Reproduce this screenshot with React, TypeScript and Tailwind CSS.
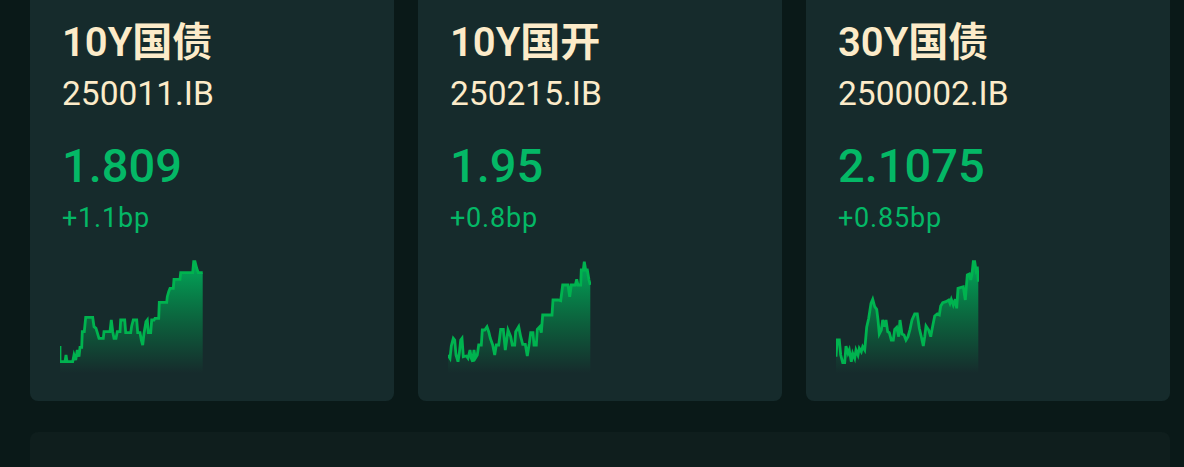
import React from "react";

type Pt = [number, number];

const toSvg = (pts: Pt[]): Pt[] => pts.map(([x, y]) => [x / 3 - 30, y / 3 - 18]);

const s1: Pt[] = toSvg([
  [90, 318], [90, 365], [105, 365], [108, 345], [111, 365], [128, 365], [132, 345], [137, 360], [142, 330], [147, 350], [150, 322], [155, 322], [157, 275], [163, 275], [167, 232], [188, 232], [192, 260], [198, 265], [207, 295], [220, 295], [222, 275], [240, 275], [244, 240], [248, 275], [252, 295], [258, 295], [262, 275], [270, 275], [272, 240], [284, 240], [287, 278], [302, 278], [305, 258], [310, 240], [320, 240], [323, 278], [330, 278], [334, 300], [338, 315], [342, 280], [348, 245], [352, 240], [355, 278], [362, 278], [365, 240], [372, 240], [375, 235], [386, 235], [388, 187], [410, 187], [412, 170], [416, 155], [420, 145], [430, 145], [432, 118], [450, 118], [452, 98], [488, 98], [491, 65], [495, 65], [500, 85], [505, 98], [518, 98],
]);

const s2: Pt[] = toSvg([
  [90, 345], [96, 355], [100, 318], [106, 295], [110, 300], [114, 345], [120, 365], [124, 340], [128, 300], [132, 295], [136, 350], [145, 348], [150, 355], [156, 330], [160, 355], [164, 365], [168, 330], [172, 355], [178, 345], [182, 315], [190, 315], [193, 270], [200, 270], [207, 260], [212, 275], [217, 295], [224, 315], [230, 345], [235, 315], [242, 315], [248, 268], [256, 268], [262, 330], [266, 300], [270, 270], [278, 290], [283, 315], [290, 315], [293, 275], [302, 260], [308, 290], [314, 313], [322, 313], [328, 348], [334, 310], [338, 278], [345, 278], [348, 315], [355, 315], [358, 268], [365, 260], [370, 278], [374, 225], [402, 225], [405, 180], [420, 180], [428, 182], [434, 135], [450, 135], [455, 170], [460, 135], [472, 135], [476, 118], [480, 135], [488, 135], [490, 90], [496, 90], [499, 65], [503, 90], [508, 90], [513, 120], [517, 135],
]);

const s3: Pt[] = toSvg([
  [90, 350], [94, 300], [100, 300], [104, 345], [110, 368], [116, 368], [120, 318], [126, 340], [130, 330], [136, 365], [140, 340], [146, 355], [150, 330], [156, 345], [160, 325], [166, 335], [170, 320], [176, 330], [178, 310], [182, 262], [188, 235], [195, 190], [200, 178], [206, 200], [212, 208], [216, 240], [220, 282], [226, 270], [230, 240], [236, 260], [240, 240], [245, 275], [250, 278], [256, 300], [262, 300], [266, 268], [272, 262], [278, 290], [282, 240], [288, 282], [294, 285], [300, 300], [306, 290], [312, 268], [318, 240], [326, 222], [334, 222], [340, 265], [346, 290], [352, 318], [356, 290], [360, 258], [368, 270], [374, 290], [380, 258], [386, 228], [394, 222], [400, 225], [404, 198], [410, 188], [420, 185], [428, 180], [432, 190], [436, 178], [442, 195], [448, 178], [452, 205], [456, 145], [466, 142], [472, 140], [478, 180], [484, 105], [490, 102], [494, 120], [498, 102], [502, 65], [506, 65], [510, 90], [514, 80], [517, 125],
]);

const W = 143;
const H = 115;

function Spark({ pts, id }: { pts: Pt[]; id: string }) {
  const line = pts.map(([x, y]) => `${x.toFixed(1)},${y.toFixed(1)}`).join(" ");
  const last = pts[pts.length - 1];
  const first = pts[0];
  const area = `${first[0].toFixed(1)},${H} ${line} ${last[0].toFixed(1)},${H}`;
  return (
    <svg width={W} height={H} viewBox={`0 0 ${W} ${H}`} className="block">
      <defs>
        <linearGradient id={id} x1="0" y1="0" x2="0" y2="1">
          <stop offset="0%" stopColor="#00b05c" stopOpacity="0.95" />
          <stop offset="60%" stopColor="#00a050" stopOpacity="0.4" />
          <stop offset="100%" stopColor="#00a050" stopOpacity="0" />
        </linearGradient>
      </defs>
      <polygon points={area} fill={`url(#${id})`} />
      <polyline points={line} fill="none" stroke="#00b34f" strokeWidth="2.8" strokeLinejoin="miter" />
    </svg>
  );
}

const cards = [
  { title: "10Y国债", code: "250011.IB", price: "1.809", chg: "+1.1bp", pts: s1 },
  { title: "10Y国开", code: "250215.IB", price: "1.95", chg: "+0.8bp", pts: s2 },
  { title: "30Y国债", code: "2500002.IB", price: "2.1075", chg: "+0.85bp", pts: s3 },
];

export default function App() {
  return (
    <div
      className="w-[1184px] h-[467px] overflow-hidden bg-[#0a1918] pl-[30px] pr-[14px]"
      style={{ fontFamily: "Roboto, 'Noto Sans CJK SC', sans-serif" }}
    >
      <div className="grid grid-cols-3 gap-6 -mt-[20px]">
        {cards.map((c, i) => (
          <div key={i} className="bg-[#162b2c] rounded-lg pt-10 pl-8 pb-[28px]">
            <div className="text-[40px] leading-[46px] font-semibold text-[#fcebc9]">{c.title}</div>
            <div className="mt-2 text-[33.5px] leading-[40px] text-[#fcebc9]">{c.code}</div>
            <div className="mt-[25px] text-[47px] leading-[54px] font-medium text-[#04b866]">{c.price}</div>
            <div className="mt-[9px] text-[27px] leading-[32px] tracking-[0.8px] text-[#04b866]">{c.chg}</div>
            <div className="mt-[24px] -ml-[2px]">
              <Spark pts={c.pts} id={`g${i}`} />
            </div>
          </div>
        ))}
      </div>
      <div className="mt-[31px] h-[200px] rounded-lg bg-[#0f1e1d]" />
    </div>
  );
}
